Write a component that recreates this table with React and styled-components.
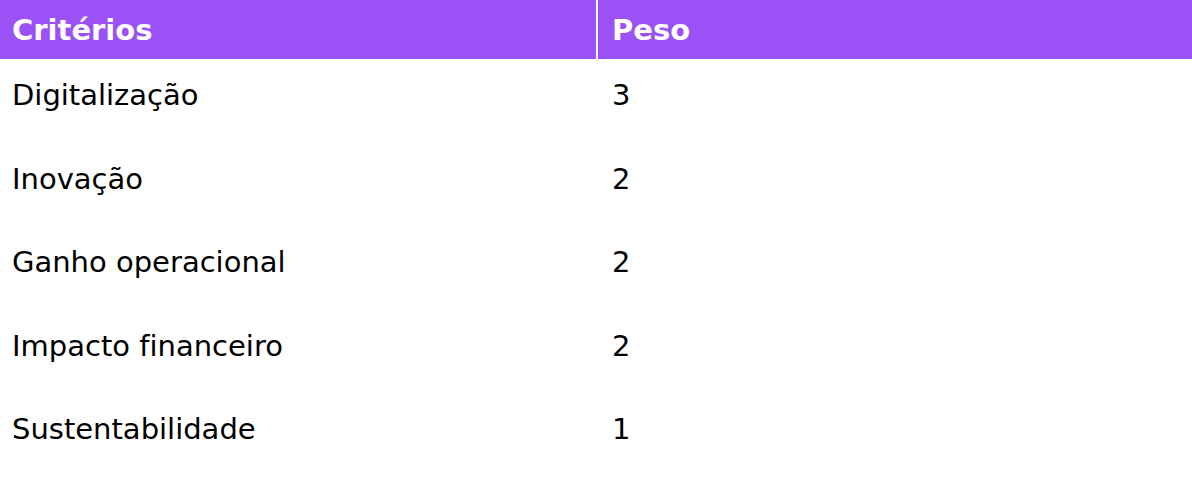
import React from "react";
import styled, { createGlobalStyle } from "styled-components";

const Global = createGlobalStyle`
  html, body { margin: 0; padding: 0; background: #fff; }
  body { font-family: "DejaVu Sans", Verdana, sans-serif; font-variant-ligatures: none; }
  * { box-sizing: border-box; }
`;

const Table = styled.div`
  display: grid;
  grid-template-columns: 596px 1fr;
  width: 1192px;
`;

const HeadCell = styled.div`
  height: 59px;
  display: flex;
  align-items: center;
  background: #9b51f5;
  color: #fff;
  font-weight: 700;
  font-size: 29px;
  padding-left: ${(p) => (p.$second ? "14px" : "12px")};
  border-left: ${(p) => (p.$second ? "2px solid #fff" : "none")};
`;

const Cell = styled.div`
  height: 83.5px;
  padding-top: 19px;
  color: #000;
  font-size: 29px;
  line-height: normal;
  padding-left: ${(p) => (p.$second ? "16px" : "12px")};
`;

const rows = [
  ["Digitalização", "3"],
  ["Inovação", "2"],
  ["Ganho operacional", "2"],
  ["Impacto financeiro", "2"],
  ["Sustentabilidade", "1"],
];

export default function App() {
  return (
    <>
      <Global />
      <Table>
        <HeadCell>Critérios</HeadCell>
        <HeadCell $second>Peso</HeadCell>
        {rows.map(([c, p]) => (
          <React.Fragment key={c}>
            <Cell>{c}</Cell>
            <Cell $second>{p}</Cell>
          </React.Fragment>
        ))}
      </Table>
    </>
  );
}
